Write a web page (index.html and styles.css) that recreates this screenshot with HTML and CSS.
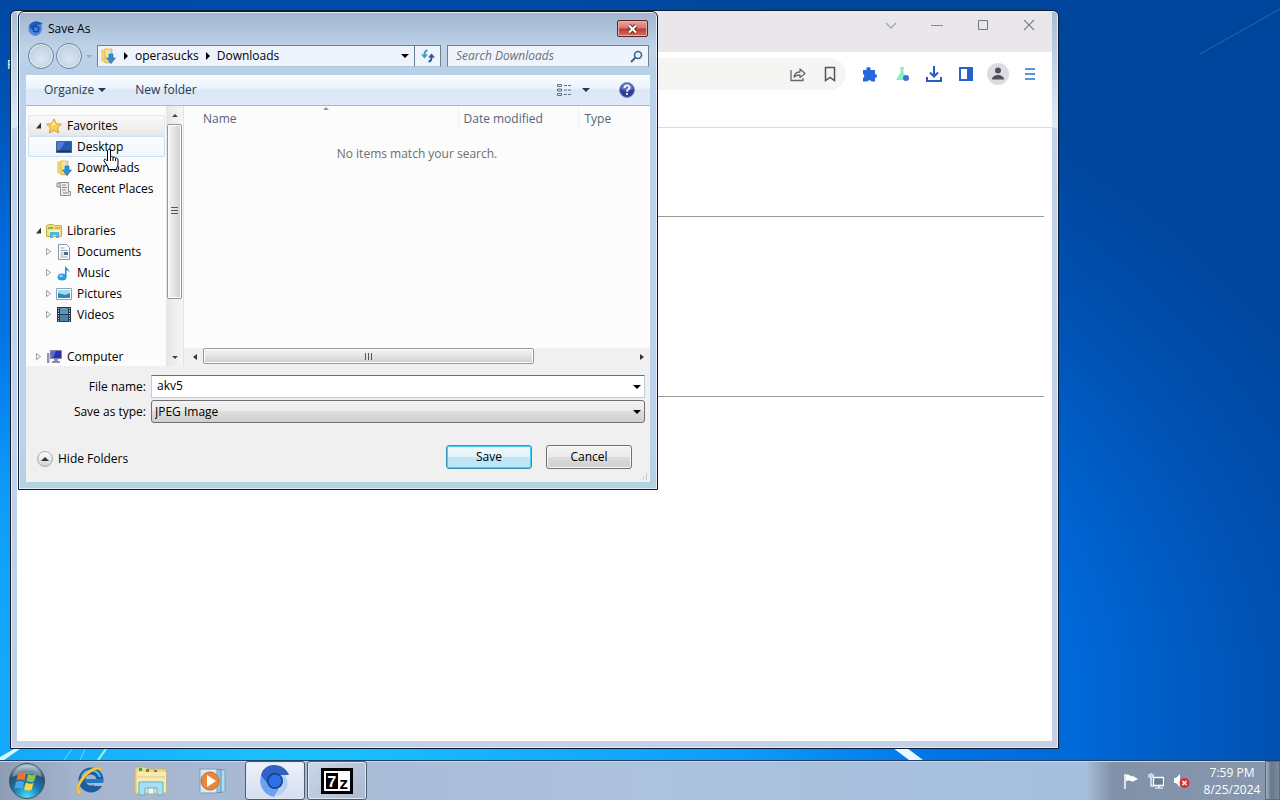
FILE: index.html
```html
<!DOCTYPE html>
<html lang="en">
<head>
    <meta charset="UTF-8">
    <meta name="viewport" content="width=device-width, initial-scale=1.0">
    <title>Save As</title>
    <link rel="stylesheet" href="styles.css">
</head>
<body>
    <svg class="defs" width="0" height="0" aria-hidden="true">
        <defs>
            <linearGradient id="gold" x1="0" y1="0" x2="1" y2="1">
                <stop offset="0" stop-color="#fff3a8"/>
                <stop offset="1" stop-color="#e8b83a"/>
            </linearGradient>
            <radialGradient id="orb" cx=".5" cy=".95" r=".9">
                <stop offset="0" stop-color="#4fe0f5"/>
                <stop offset=".45" stop-color="#1878b0"/>
                <stop offset=".8" stop-color="#27506f"/>
                <stop offset="1" stop-color="#9fb8c8"/>
            </radialGradient>
            <symbol id="chromium" viewBox="0 0 32 32">
                <path d="M15 0C8 0 3 4 2 11l7 9 7-10h14C28 4 22 0 15 0z" fill="#2f63c4"/>
                <path d="M2 11c-3 8 2 19 13 21l5-8-11-5z" fill="#6ba3f2"/>
                <path d="M23 10h3c6 9 1 19-9 21l5-9z" fill="#b4cef6"/>
                <circle cx="16" cy="16" r="8" fill="#183f8c"/>
                <circle cx="16" cy="16" r="6.500" fill="#2b70e4"/>
            </symbol>
            <symbol id="chromium-small" viewBox="0 0 16 16">
                <path d="M1 5C3 0 10-1 15 3h-2c2 4 1 10-5 12C2 14-1 10 1 5z" fill="#4a86e0"/>
                <path d="M1 5C3 0 10-1 15 3L9 4 4 9z" fill="#1f58b8"/>
                <circle cx="8" cy="8" r="3.500" fill="#143f94"/>
                <circle cx="8" cy="8" r="2.300" fill="#3a7ce8"/>
            </symbol>
            <symbol id="downloads" viewBox="0 0 16 16">
                <path d="M1 2l6-2v15l-6-2z" fill="#f4d56c"/>
                <path d="M5 1h7v14H5z" fill="url(#gold)" stroke="#d0a840" stroke-width=".6"/>
                <path d="M7 4h4v9H7z" fill="#cfe4f4"/>
                <path d="M9 6h4v4h2.500l-4.500 5.500L6.500 10H9z" fill="#2f8fd0" stroke="#1c6ba8" stroke-width=".6"/>
            </symbol>
        </defs>
    </svg>

    <main class="desktop">
        <svg class="wallpaper" viewBox="0 0 1280 760" preserveAspectRatio="none" aria-hidden="true">
            <path d="M0 757l14-8h6L4 760H0z" fill="#d8f4ff"/>
            <path d="M64 760l8-11M80 760l5-11" stroke="#70d8ff" stroke-width="1"/>
            <path d="M98 760l8-11" stroke="#a8f8c8" stroke-width="2"/>
            <path d="M893 748l14 0 16 12h-14z" fill="#e8f8ff"/>
            <path d="M1200 54l80-45" stroke="#2f68a4" stroke-width="1"/>
        </svg>
        <div class="shortcut">R</div>

        <section class="window browser">
            <div class="browser-view">
                <div class="tab-strip">
                    <button class="caption" aria-label="Search tabs"><svg width="12" height="12" viewBox="0 0 12 12"><path d="M1 4l5 5 5-5" fill="none" stroke="#a8a8ac" stroke-width="1.300"/></svg></button>
                    <button class="caption" aria-label="Minimize"><svg width="12" height="12" viewBox="0 0 12 12"><path d="M0 6.500h12" stroke="#8a8a8e"/></svg></button>
                    <button class="caption" aria-label="Maximize"><svg width="12" height="12" viewBox="0 0 12 12"><path d="M1.500 1.500h9v9h-9z" fill="none" stroke="#77777b"/></svg></button>
                    <button class="caption" aria-label="Close"><svg width="12" height="12" viewBox="0 0 12 12"><path d="M1 1l10 10M11 1L1 11" stroke="#808084" stroke-width="1.100"/></svg></button>
                </div>
                <div class="browser-bar">
                    <div class="omnibox">
                        <button class="tool" aria-label="Share"><svg width="16" height="16" viewBox="0 0 16 16" fill="none" stroke="#68686c" stroke-width="1.300"><path d="M1 4v10.500h12V12"/><path d="M4 11c.5-4 3-5 6-5V3l5 4.500-5 4V9C7 9 5.500 9.500 4 11z" stroke-linejoin="round"/></svg></button>
                        <button class="tool" aria-label="Bookmark"><svg width="16" height="16" viewBox="0 0 16 16"><path d="M3.500 1.500h9v13L8 11.500l-4.500 3z" fill="none" stroke="#55555a" stroke-width="1.500"/></svg></button>
                    </div>
                    <button class="tool" aria-label="Extensions"><svg width="16" height="16" viewBox="0 0 16 16"><path d="M1 4h3.500a2.200 2.200 0 1 1 4 0H13v4a2 2 0 1 1 0 4v3.500H9.500a2.200 2.200 0 0 0-4 0H1V12a2.200 2.200 0 0 0 0-4z" fill="#2868dc"/></svg></button>
                    <button class="tool" aria-label="Labs"><svg width="16" height="16" viewBox="0 0 16 16"><path d="M6 1h4v1.500H9.500v4L14 14H2l4.500-7.500v-4H6z" fill="#8ceec0"/><circle cx="12" cy="12" r="3" fill="#3e6fdc"/></svg></button>
                    <button class="tool" aria-label="Downloads"><svg width="18" height="18" viewBox="0 0 18 18"><path d="M9 1v10M5 7.500l4 4 4-4M2 12v4h14v-4" fill="none" stroke="#245fc8" stroke-width="2"/></svg></button>
                    <button class="tool" aria-label="Side panel"><svg width="16" height="16" viewBox="0 0 16 16"><path d="M2 2h12v12H2z" fill="#fff" stroke="#2461cf" stroke-width="2"/><path d="M9 2h5v12H9z" fill="#2461cf"/></svg></button>
                    <button class="tool" aria-label="Profile"><svg width="22" height="22" viewBox="0 0 22 22"><circle cx="11" cy="11" r="11" fill="#dcdce2"/><circle cx="11" cy="7.500" r="3" fill="#50505c"/><path d="M5 16.500c0-3 3-4.500 6-4.500s6 1.500 6 4.500z" fill="#50505c"/></svg></button>
                    <button class="tool" aria-label="Menu"><svg width="12" height="14" viewBox="0 0 12 14"><path d="M1 2h10M1 7h10M1 12h10" stroke="#2c70c8" stroke-width="1.600"/></svg></button>
                </div>
                <div class="page">
                    <hr>
                    <hr>
                </div>
            </div>
        </section>

        <form class="window dialog" onsubmit="return false">
            <header class="title-bar">
                <svg width="16" height="16"><use href="#chromium-small"/></svg>
                <h1>Save As</h1>
                <button type="button" class="close" aria-label="Close"><svg width="11" height="10" viewBox="0 0 11 10"><path d="M2 1.500l7 7M9 1.500l-7 7" stroke="#60282a" stroke-width="4"/><path d="M2 1.500l7 7M9 1.500l-7 7" stroke="#fff" stroke-width="2.200"/></svg></button>
            </header>

            <nav class="nav-bar">
                <div class="history">
                    <button type="button" class="round" aria-label="Back"></button>
                    <button type="button" class="round" aria-label="Forward"></button>
                    <i class="caret pale"></i>
                </div>
                <div class="address">
                    <svg width="16" height="16"><use href="#downloads"/></svg>
                    <i class="caret right"></i>
                    <a href="#">operasucks</a>
                    <i class="caret right"></i>
                    <a href="#">Downloads</a>
                    <i class="caret last"></i>
                </div>
                <button type="button" class="refresh" aria-label="Refresh"><svg width="14" height="14" viewBox="0 0 14 14"><path d="M6.500 1.500C4 1.500 3.500 3 3.500 6" fill="none" stroke="#3d9bc4" stroke-width="2"/><path d="M0 5.500h7L3.500 9.500z" fill="#3d9bc4"/><path d="M7.500 12.500c2.500 0 3-1.500 3-4.500" fill="none" stroke="#28579c" stroke-width="2"/><path d="M7 8.500h7l-3.500-4z" fill="#28579c"/></svg></button>
                <label class="search">
                    <input type="search" placeholder="Search Downloads" aria-label="Search Downloads">
                    <svg width="13" height="13" viewBox="0 0 13 13"><circle cx="8" cy="5" r="3.500" fill="#e8f2fc" stroke="#3b6591" stroke-width="1.600"/><path d="M5.500 7.500L1 12" stroke="#3b6591" stroke-width="2"/></svg>
                </label>
            </nav>

            <div class="dialog-body">
                <div class="command-bar">
                    <button type="button">Organize <i class="caret"></i></button>
                    <button type="button">New folder</button>
                    <button type="button" class="view" aria-label="Change view"><svg width="17" height="14" viewBox="0 0 17 14" fill="none" stroke="#5f6f88"><path d="M1.500 1.500h4v2h-4zM1.500 6h4v2h-4zM1.500 10.500h4v2h-4z"/><path d="M8 2.500h8M8 7h8M8 11.500h8" stroke-dasharray="3 1"/></svg><i class="caret"></i></button>
                    <button type="button" aria-label="Help"><svg width="16" height="16" viewBox="0 0 16 16"><circle cx="8" cy="8" r="7.500" fill="#2b3f9c" stroke="#8c98bc"/><path d="M2 7a6 6 0 0 1 12 0c-4 2-8 2-12 0z" fill="#6575c0"/><path d="M5.500 6c0-3.500 5-3.300 5-.5C10.500 7.500 8 7.300 8 9.700" fill="none" stroke="#fff" stroke-width="1.800"/><circle cx="8" cy="12" r="1.100" fill="#fff"/></svg></button>
                </div>

                <div class="panes">
                    <ul class="tree">
                        <li>
                            <a href="#" class="row group current"><i class="open"></i><svg width="16" height="16" viewBox="0 0 16 16"><path d="M8 .8l2.200 4.900 5.200.5-3.900 3.500 1.200 5.300L8 12.300 3.300 15l1.200-5.300L.6 6.200l5.200-.5z" fill="#fbd24b" stroke="#e8973a"/><path d="M8 3l1.500 3.500L5 8z" fill="#fff0a0"/></svg>Favorites</a>
                            <ul>
                                <li><a href="#" class="row hover"><i class="none"></i><svg width="16" height="16" viewBox="0 0 16 16"><path d="M.5 2.500h15v11H.5z" fill="#2458b4" stroke="#4a5f88"/><path d="M1 3h8L4 11H1z" fill="#4a80d4"/><path d="M1 11.500h14V13H1z" fill="#203060"/></svg>Desktop</a></li>
                                <li><a href="#" class="row"><i class="none"></i><svg width="16" height="16"><use href="#downloads"/></svg>Downloads</a></li>
                                <li><a href="#" class="row"><i class="none"></i><svg width="16" height="16" viewBox="0 0 16 16"><path d="M3.500 1.500h9v9h2v4h-10v-9h-1z" fill="#ececec" stroke="#909090"/><path d="M1 2h3v4H1zM6 4h4M6 6.500h5M6 9h4M7 12h6" fill="#d8d8d8" stroke="#8c8c8c"/></svg>Recent Places</a></li>
                            </ul>
                        </li>
                        <li>
                            <a href="#" class="row group"><i class="open"></i><svg width="16" height="16" viewBox="0 0 16 16"><path d="M.5 2.500l2-1h5l1 1h7v11H.5z" fill="#f5dc78" stroke="#c8b040"/><path d="M2 4h5v2H2z" fill="#6cc070"/><path d="M9 4h5v2H9z" fill="#f0a850"/><path d="M3 7h11v3H3z" fill="#fff5b8"/><path d="M4 15V9h9v6h-3v-3H7v3z" fill="#58b4dc"/></svg>Libraries</a>
                            <ul>
                                <li><a href="#" class="row"><i class="shut"></i><svg width="16" height="16" viewBox="0 0 16 16"><path d="M2.500.5h8l3 3v12h-11z" fill="#fafcfe" stroke="#8a98a8"/><path d="M4.500 4h4M4.500 6.500h7M4.500 9h3M4.500 11h3M4.500 13h7" stroke="#8fa4b8"/><path d="M8 8h4v3H8z" fill="#486c90"/></svg>Documents</a></li>
                                <li><a href="#" class="row"><i class="shut"></i><svg width="16" height="16" viewBox="0 0 16 16"><path d="M9 0c.5 3.500 5 4 4.500 8-.4-2-1.500-2.500-3-3v7H9z" fill="#2f8cc0"/><ellipse cx="6" cy="12" rx="4.500" ry="3.500" fill="#2c9cdc"/><ellipse cx="5" cy="11" rx="2" ry="1.300" fill="#8cd4f4"/></svg>Music</a></li>
                                <li><a href="#" class="row"><i class="shut"></i><svg width="16" height="16" viewBox="0 0 16 16"><path d="M.5 2.500h15v11H.5z" fill="#fff" stroke="#8ca4b4"/><path d="M2 4h12v8H2z" fill="#9cdcf4"/><path d="M2 7l4 1 3 1 5-2v5H2z" fill="#2e88b8"/></svg>Pictures</a></li>
                                <li><a href="#" class="row"><i class="shut"></i><svg width="16" height="16" viewBox="0 0 16 16"><path d="M1 0h14v15H1z" fill="#28384c"/><path d="M4 1h8v6H4z" fill="#5c94b8"/><path d="M4 8h8v6H4z" fill="#4c84a8"/><path d="M2.500 1v14M13.500 1v14" stroke="#dce4ec" stroke-dasharray="1 1.500"/></svg>Videos</a></li>
                            </ul>
                        </li>
                        <li>
                            <a href="#" class="row group"><i class="shut"></i><svg width="16" height="16" viewBox="0 0 16 16"><path d="M4.500 1.500h11v8h-11z" fill="#2a30b0" stroke="#8088a0"/><path d="M5 2h5L7 9H5z" fill="#6068d8"/><path d="M8 10h4v2h2v2H6v-2h2z" fill="#8890a8"/><path d="M1 4h2.500v10H1z" fill="#9890b8"/></svg>Computer</a>
                        </li>
                    </ul>
                    <div class="scroll vertical">
                        <i class="arrow up"></i>
                        <div class="track"><div class="thumb"></div></div>
                        <i class="arrow down"></i>
                    </div>

                    <div class="files">
                        <table>
                            <thead>
                                <tr>
                                    <th class="name sorted">Name</th>
                                    <th class="date">Date modified</th>
                                    <th>Type</th>
                                </tr>
                            </thead>
                            <tbody>
                                <tr><td colspan="3">No items match your search.</td></tr>
                            </tbody>
                        </table>
                        <div class="scroll horizontal">
                            <i class="arrow left"></i>
                            <div class="track"><div class="thumb"></div></div>
                            <i class="arrow right"></i>
                        </div>
                    </div>
                </div>

                <div class="fields">
                    <label for="file-name">File name:</label>
                    <div class="field">
                        <input type="text" id="file-name" value="akv5">
                        <i class="caret"></i>
                    </div>
                    <label for="file-type">Save as type:</label>
                    <div class="field">
                        <select id="file-type">
                            <option>JPEG Image</option>
                        </select>
                        <i class="caret"></i>
                    </div>
                </div>

                <footer class="actions">
                    <button type="button" class="hide-folders"><span class="toggle"></span>Hide Folders</button>
                    <button type="submit" class="push default">Save</button>
                    <button type="button" class="push">Cancel</button>
                </footer>
                <i class="grip"></i>
            </div>
        </form>

        <svg class="pointer" width="18" height="24" viewBox="0 0 18 24"><path d="M5 1.500c1.500-1 2.500 0 2.500 1.500v6c1-1 2.200-.6 2.500.5 1-.8 2.200-.3 2.500.8 1.300-.6 2.500.2 2.500 1.700v4c0 2-1.500 3-1.500 5.500h-8C5.500 18 2 15.500 1 12.500c0-1.500 1.500-2 2.500-.5l1 1V2.500" fill="#fff" stroke="#000"/><path d="M7.500 9v4M10 9.500V13M12.500 10.500V13" stroke="#000"/></svg>
    </main>

    <footer class="taskbar">
        <button class="start" aria-label="Start"><svg width="38" height="38" viewBox="0 0 38 38"><circle cx="19" cy="19" r="17.500" fill="url(#orb)" stroke="#3c5468"/><path d="M4 15a15.500 15.500 0 0 1 30 0c-9-4-21-4-30 0z" fill="#fff" opacity=".35"/><path d="M10 12c3-2 6-2 8-.5l-1.500 7c-2-1.500-5-1.500-8 0z" fill="#f07030"/><path d="M20 12c3 1.500 5 1.500 8 .5l-2 7c-3 1-5 .5-7.500-.5z" fill="#90c83c"/><path d="M8 20c3-1.500 6-1.500 8 0l-1.500 7c-2-1.500-5-1.500-8 0z" fill="#48a8e8"/><path d="M18 20.500c3 1.500 5 1.500 7.500.5l-2 7c-3 1-5 .5-7.500-.5z" fill="#fcd444"/></svg></button>
        <button class="task" aria-label="Internet Explorer"><svg width="32" height="32" viewBox="0 0 32 32"><circle cx="18" cy="15" r="9" fill="none" stroke="#1b5ca4" stroke-width="7"/><path d="M9 12a9.500 9.500 0 0 1 18 0" fill="none" stroke="#58c0e8" stroke-width="2"/><path d="M12 14h18v4H12z" fill="#2478c0"/><path d="M21 18h11l-1 3H21z" fill="#a8bcd4"/><path d="M6 29C-2 25 12 2 25 2c3 0 4 2 3 4C26 2 17 6 11 14S4 26 9 26c-1 2-1 3-3 3z" fill="#f8cc38" stroke="#e0a428" stroke-width=".5"/></svg></button>
        <button class="task" aria-label="Windows Explorer"><svg width="34" height="32" viewBox="0 0 34 32"><path d="M1 4l3-2h8l2 2h18v25H1z" fill="#ecd98c" stroke="#c8b468"/><path d="M3 7h29v20H3z" fill="#f8eab0"/><path d="M5 3h3v3H5z" fill="#40a060"/><path d="M12 4h3v3h-3zM20 5h3v2h-3z" fill="#7c8050"/><path d="M3 12h28" stroke="#e0c878"/><path d="M5 30V17h24v13h-6v-7H11v7z" fill="#a8e0f4" stroke="#58b0d0"/><path d="M14 23h6v6h-6z" fill="#e8f8ff" stroke="#80b8cc"/></svg></button>
        <button class="task" aria-label="Windows Media Player"><svg width="28" height="28" viewBox="0 0 28 28"><path d="M8 3h18v22H8z" fill="#b8dcec" stroke="#6ca4c4"/><path d="M4 2.500h18v23H4z" fill="#90c8e4" stroke="#5890b8"/><path d="M1 2h17v24H1z" fill="#dce8f0" stroke="#78a0bc"/><circle cx="11" cy="14" r="9" fill="#e8883c" stroke="#d06820"/><path d="M8 8l9 6-9 6z" fill="#fff"/></svg></button>
        <button class="task running active" aria-label="Chromium"><svg width="32" height="32"><use href="#chromium"/></svg></button>
        <button class="task running" aria-label="7-Zip"><svg width="32" height="26" viewBox="0 0 32 26"><path d="M1.500 1.500h29v23h-29z" fill="#fff" stroke="#000" stroke-width="3"/><path d="M5 5h12v16H5z"/><text class="seven" x="6" y="19">7</text><text class="zed" x="18" y="21">z</text></svg></button>

        <div class="tray">
            <svg width="16" height="16" viewBox="0 0 16 16"><path d="M2 1v15" stroke="#fff" stroke-width="1.500"/><path d="M3 2c3-1.500 4 1.500 6 1.500V2.500L15 6l-6 3V8C7 8.500 6 6.500 3 8z" fill="#fff"/></svg>
            <svg width="16" height="16" viewBox="0 0 16 16"><path d="M5.500 4.500h10v8h-10z" fill="#6c7c90" stroke="#fff" stroke-width="1.300"/><path d="M7 15h8M11 13v2M1 1v3h4V1M3 0v3M3 4v9h3" fill="none" stroke="#fff" stroke-width="1.200"/></svg>
            <svg width="17" height="16" viewBox="0 0 17 16"><path d="M1 5h2l4-4v13l-4-4H1z" fill="#fff"/><circle cx="11.500" cy="10" r="5" fill="#d83030"/><path d="M9.500 8l4 4M13.500 8l-4 4" stroke="#fff" stroke-width="1.500"/></svg>
            <div class="clock">
                <time>7:59 PM</time>
                <time>8/25/2024</time>
            </div>
            <button class="show-desktop" aria-label="Show desktop"></button>
        </div>
    </footer>
</body>
</html>
```
FILE: styles.css
```css
* {
    box-sizing: border-box;
}
body {
    margin: 0;
    height: 100vh;
    display: flex;
    flex-direction: column;
    overflow: hidden;
    font-family: 'Open Sans', 'Noto Sans', sans-serif;
    font-size: 12px;
    line-height: 16px;
    color: #000;
}
button, input, select {
    font: inherit;
    color: inherit;
    margin: 0;
    padding: 0;
    border: none;
    background: none;
}
a {
    color: inherit;
    text-decoration: none;
}
ul {
    list-style: none;
    margin: 0;
    padding: 0;
}
svg {
    flex: none;
    display: block;
}
.defs {
    position: absolute;
}

/* desktop */
.desktop {
    flex: 1;
    position: relative;
    overflow: hidden;
    background: radial-gradient(ellipse 1150px 780px at 300px 720px, #1cc4ff 0, #0f9cfa 38%, #0074e6 56%, #0068d8 68%, #0052b4 84%, #00459c 100%);
}
.wallpaper {
    position: absolute;
    width: 100%;
    height: 100%;
}
.shortcut {
    position: absolute;
    left: 7px;
    top: 57px;
    color: #fff;
}
.window {
    position: absolute;
    border: 1px solid #0b1c30;
    border-radius: 6px 6px 0 0;
    box-shadow: inset 0 0 0 1px #e4eefa;
}

/* browser */
.browser {
    top: 10px;
    left: 10px;
    right: 221px;
    bottom: 11px;
    padding: 1px 6px 7px;
    background: linear-gradient(#a9bdd3, #dcebf8 116px, #c1d3e9 118px, #c3d0e6);
}
.browser-view {
    height: 100%;
    background: #fff;
}
.tab-strip {
    height: 40px;
    display: flex;
    justify-content: flex-end;
    align-items: flex-start;
    background: #e9e7ea;
}
.caption {
    width: 46px;
    height: 26px;
    display: grid;
    place-items: center;
}
.browser-bar {
    height: 76px;
    padding: 6px 6px 0 0;
    display: flex;
    align-items: flex-start;
    border-bottom: 1px solid #d9dcdf;
}
.omnibox {
    flex: 1;
    height: 32px;
    margin-right: 8px;
    display: flex;
    justify-content: flex-end;
    background: #f5f5f4;
    border-radius: 16px;
}
.tool {
    width: 32px;
    height: 32px;
    display: grid;
    place-items: center;
}
.page {
    padding: 88px 8px 0;
}
.page hr {
    margin: 0 0 179px;
    border: none;
    border-top: 1px solid #999b96;
}

/* save dialog */
.dialog {
    top: 11px;
    left: 18px;
    width: 640px;
    padding: 0 7px 7px;
    background: linear-gradient(#a0b5cd, #bfd3e9 36px, #b7d0e8 64px, #bbd1ec 70px, #bbd1ec 90%, #b2d3dd);
}
.title-bar {
    height: 33px;
    padding: 0 2px;
    display: flex;
    align-items: center;
    gap: 4px;
}
.title-bar h1 {
    margin: 0;
    font-size: 12px;
    font-weight: normal;
}
.close {
    width: 31px;
    height: 17px;
    margin-left: auto;
    display: grid;
    place-items: center;
    border: 1px solid #5d2224;
    border-radius: 2px;
    background: linear-gradient(#e6a8a0, #d4776c 48%, #b93a30 52%, #d4705f);
    box-shadow: inset 0 0 0 1px #e8b0a8;
}
.nav-bar {
    display: flex;
    align-items: center;
    height: 30px;
    padding: 0 1px 8px 2px;
}
.history {
    width: 69px;
    display: flex;
    align-items: center;
    gap: 2px;
}
.round {
    width: 26px;
    height: 26px;
    border: 1px solid #6f8296;
    border-radius: 50%;
    background: radial-gradient(circle at 50% 60%, #dbe7f2, #b5c8da);
    box-shadow: inset 0 0 0 1px #e4eef6;
}
.caret {
    width: 0;
    height: 0;
    border: 4px solid transparent;
    border-top-color: currentColor;
    border-bottom: none;
}
.caret.right {
    border: 4px solid transparent;
    border-left-color: currentColor;
    border-right: none;
}
.caret.pale {
    margin-left: 2px;
    border-width: 3px 3px 0;
    color: #93a9c2;
}
.address {
    flex: 1;
    height: 22px;
    padding: 0 5px 0 2px;
    display: flex;
    align-items: center;
    gap: 7px;
    border: 1px solid #6d7f94;
    border-bottom-color: #b4c4d8;
    background: #eff4fc;
}
.address svg {
    margin-right: 1px;
}
.address .last {
    margin-left: auto;
}
.refresh {
    width: 26px;
    height: 22px;
    display: grid;
    place-items: center;
    border: 1px solid #6d7f94;
    border-left: none;
    border-bottom-color: #b4c4d8;
    background: #eff4fc;
}
.search {
    width: 202px;
    height: 22px;
    margin-left: 6px;
    padding: 0 5px 0 8px;
    display: flex;
    align-items: center;
    border: 1px solid #6d7f94;
    border-bottom-color: #b4c4d8;
    background: #eff4fc;
}
.search input {
    flex: 1;
    min-width: 0;
    outline: none;
}
.search input::placeholder {
    color: #6b7078;
    font-style: italic;
}
.dialog-body {
    position: relative;
    background: #f0f0f0;
}
.command-bar {
    height: 31px;
    padding: 0 15px 0 18px;
    display: flex;
    align-items: center;
    color: #1e395b;
    background: linear-gradient(#fafdff, #eaf3fc 45%, #dce7f5 50%, #dfebf9);
    border-bottom: 1px solid #a8b8cc;
}
.command-bar button {
    display: flex;
    align-items: center;
    gap: 4px;
    margin-right: 29px;
}
.command-bar .view {
    gap: 9px;
    margin-left: auto;
}
.command-bar button:last-child {
    margin-right: 0;
}
.panes {
    height: 260px;
    display: flex;
    background: #fcfcfc;
}
.tree {
    width: 140px;
    padding: 9px 1px 0 2px;
    overflow: hidden;
}
.tree > li {
    margin-bottom: 21px;
}
.row {
    height: 21px;
    padding-left: 17px;
    display: flex;
    align-items: center;
    gap: 5px;
    border: 1px solid transparent;
}
.row.group {
    padding-left: 7px;
}
.row.current {
    background: linear-gradient(#fafafa, #e9e9e9);
    border-color: #e4e4e4;
    border-radius: 2px;
}
.row.hover {
    background: linear-gradient(#fbfdff, #f0f7fd);
    border-color: #c8e0f2;
    border-radius: 2px;
}
.row i {
    width: 5px;
    height: 6px;
}
.row .open {
    background: #333;
    clip-path: polygon(100% 0, 100% 100%, 0 100%);
}
.row .shut {
    width: 5px;
    height: 8px;
    background: linear-gradient(90deg, #aaa, #888);
    clip-path: polygon(0 0, 100% 50%, 0 100%, 0 0, 1px 2px, 1px 6px, 4px 50%, 1px 2px);
}
.scroll {
    display: flex;
    background: #f0f0f0;
}
.vertical {
    width: 18px;
    flex-direction: column;
    border-right: 1px solid #e4e4e4;
    background: linear-gradient(90deg, #e6e6e6, #f6f6f6);
}
.horizontal {
    height: 18px;
    padding-left: 2px;
}
.arrow {
    width: 17px;
    height: 18px;
    flex: none;
    display: grid;
    place-items: center;
}
.arrow::before {
    content: '';
    border: 3px solid transparent;
}
.arrow.up::before {
    border-bottom-color: #444;
    border-top: none;
}
.arrow.down::before {
    border-top-color: #444;
    border-bottom: none;
}
.arrow.left::before {
    border-right: 4px solid #333;
    border-left: none;
}
.arrow.right::before {
    border-left: 4px solid #333;
    border-right: none;
}
.track {
    flex: 1;
    display: flex;
    align-items: flex-start;
}
.vertical .track {
    flex-direction: column;
    align-items: center;
}
.thumb {
    display: grid;
    place-items: center;
    border: 1px solid #979797;
    border-radius: 2px;
    box-shadow: inset 0 0 0 1px #fff;
}
.thumb::before {
    content: '';
}
.vertical .thumb {
    width: 15px;
    height: 78%;
    background: linear-gradient(90deg, #f4f4f4, #e4e4e4 50%, #cdcdcd);
}
.horizontal .thumb {
    width: 77%;
    height: 16px;
    background: linear-gradient(#f4f4f4, #e4e4e4 50%, #cdcdcd);
}
.vertical .thumb::before {
    width: 7px;
    height: 8px;
    background: repeating-linear-gradient(#555 0, #555 1px, transparent 1px, transparent 3px);
}
.horizontal .thumb::before {
    width: 8px;
    height: 7px;
    background: repeating-linear-gradient(90deg, #555 0, #555 1px, transparent 1px, transparent 3px);
}
.files {
    flex: 1;
    min-width: 0;
    display: flex;
    flex-direction: column;
    justify-content: space-between;
}
.files table {
    width: 100%;
    table-layout: fixed;
    border-collapse: collapse;
    color: #6d6d6d;
}
.files th {
    position: relative;
    height: 25px;
    padding: 0 0 0 6px;
    text-align: left;
    font-weight: normal;
    color: #596475;
    border-left: 1px solid #f0f1f3;
}
.files .name {
    width: 274px;
    padding-left: 19px;
    border-left: none;
}
.files .date {
    width: 120px;
    padding-left: 5px;
}
.sorted::before {
    content: '';
    position: absolute;
    top: 1px;
    left: 51%;
    border: 3px solid transparent;
    border-bottom: 3px solid #8c9aa8;
    border-top: none;
}
.files td {
    height: 45px;
    padding: 0;
    text-align: center;
}

/* fields and buttons */
.fields {
    padding: 9px 5px 0 0;
    display: grid;
    grid-template-columns: 120px 1fr;
    align-items: center;
    gap: 2px 5px;
}
.fields label {
    text-align: right;
}
.field {
    position: relative;
}
.field input,
.field select {
    display: block;
    width: 100%;
    height: 23px;
}
.field input {
    padding: 0 20px 2px 5px;
    background: #fff;
    border: 1px solid #b5cfe7;
    border-top-color: #3d7bad;
}
.field select {
    appearance: none;
    padding: 0 20px 0 3px;
    border: 1px solid #707070;
    border-radius: 3px;
    background: linear-gradient(#f2f2f2, #ebebeb 50%, #dddddd 50%, #cfcfcf);
}
.field .caret {
    position: absolute;
    right: 4px;
    top: 10px;
    pointer-events: none;
}
.actions {
    padding: 22px 18px 13px 11px;
    display: flex;
    align-items: flex-start;
    gap: 14px;
}
.hide-folders {
    margin-right: auto;
    padding-top: 6px;
    display: flex;
    align-items: center;
    gap: 5px;
}
.toggle {
    width: 16px;
    height: 16px;
    display: grid;
    place-items: center;
    border: 1px solid #a4acb0;
    border-radius: 50%;
    background: linear-gradient(#fff, #ccd4d6);
}
.toggle::before {
    content: '';
    border: 4px solid transparent;
    border-bottom-color: #333;
    border-top: none;
}
.push {
    width: 86px;
    height: 24px;
    border: 1px solid #707070;
    border-radius: 3px;
    background: linear-gradient(#f3f3f3, #ebebeb 50%, #dddddd 50%, #cfcfcf);
    box-shadow: inset 0 0 0 1px #f8f8f8;
}
.push.default {
    border-color: #3c8fb0;
    background: linear-gradient(#eef8fc, #e0f3fa 50%, #c4e5f4 50%, #b8e8f8);
    box-shadow: inset 0 0 0 1px #48d0f4;
}
.grip {
    position: absolute;
    right: 2px;
    bottom: 2px;
    width: 8px;
    height: 8px;
    background: repeating-linear-gradient(90deg, #c4ccd4 0, #c4ccd4 1px, transparent 1px, transparent 3px);
    clip-path: polygon(100% 0, 100% 100%, 0 100%);
}
.pointer {
    position: absolute;
    left: 103px;
    top: 148px;
}

/* taskbar */
.taskbar {
    height: 40px;
    display: flex;
    gap: 2px;
    background: linear-gradient(90deg, #8f9db4, #a5b4cf 80px, #a9b9d4 240px, #adc2dd 50%, #a4bfdf 85%, #a4bbd6 1085px, #8191a9 1112px, #8797ae);
    border-top: 1px solid #1d4266;
    box-shadow: inset 0 1px 0 #c4d8ec;
}
.start {
    width: 57px;
    padding-right: 3px;
    display: grid;
    place-items: center;
}
.task {
    width: 60px;
    display: grid;
    place-items: center;
}
.running {
    border: 1px solid #4b5b70;
    border-radius: 3px;
    background: linear-gradient(135deg, #cbd6e6, #a9b9d1);
    box-shadow: inset 0 0 0 1px #dfe8f4;
}
.running.active {
    background: linear-gradient(#eef3fa, #d3def0);
}
.seven,
.zed {
    font: bold 16px 'Liberation Mono', monospace;
    fill: #fff;
}
.zed {
    fill: #000;
}
.tray {
    margin-left: auto;
    display: flex;
    align-items: center;
    gap: 9px;
    color: #fff;
}
.clock {
    width: 66px;
    text-align: center;
}
.clock time {
    display: block;
    line-height: 17px;
}
.show-desktop {
    width: 15px;
    height: 39px;
    margin-left: -9px;
    border: 1px solid #5c6c80;
    background: linear-gradient(90deg, #a0b0c0, #66788c 40%, #7c8ca0);
}
```
